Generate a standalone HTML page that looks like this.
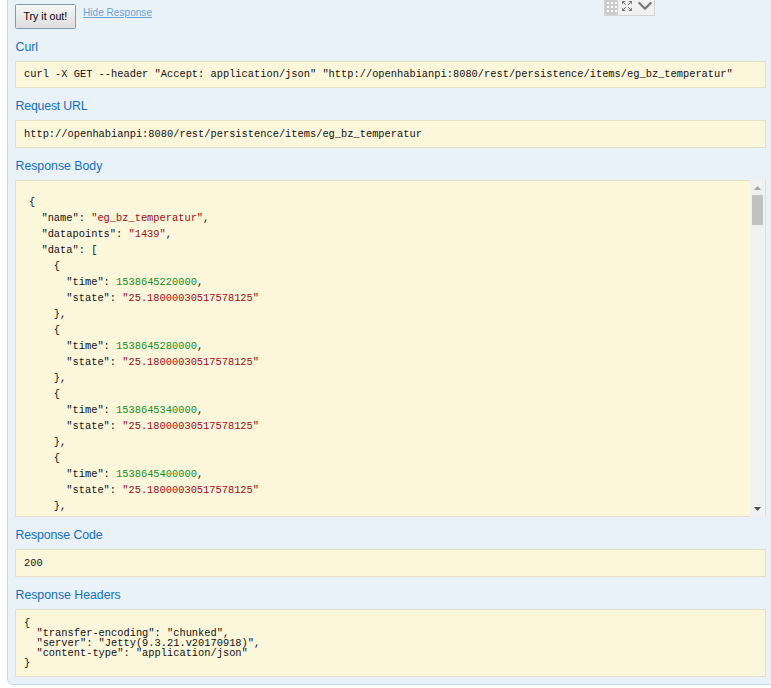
<!DOCTYPE html>
<html><head><meta charset="utf-8">
<style>
html,body{margin:0;padding:0;background:#fff;width:771px;height:688px;overflow:hidden;position:relative;font-family:"Liberation Sans",sans-serif;}
.abs{position:absolute;}
#cont{position:absolute;left:7px;top:-20px;width:800px;height:705px;background:#e9f1f9;border:1px solid #c3d9ec;border-radius:0 0 0 6px;box-sizing:border-box;}
#btn{position:absolute;left:15px;top:4px;width:60.5px;height:24.7px;box-sizing:border-box;border:1px solid #7f9ab5;border-radius:1.5px;background:linear-gradient(#f6f6f6,#dedede);}
#btntxt{position:absolute;left:23.5px;top:8px;font-size:10.6px;line-height:16px;color:#000;white-space:nowrap;}
#hide{position:absolute;left:83px;top:5.8px;font-size:10.1px;line-height:14px;color:#6ba2d4;text-decoration:underline;white-space:nowrap;}
h4{position:absolute;margin:0;left:15.5px;font-weight:normal;font-size:12.3px;line-height:16px;color:#1370c0;white-space:nowrap;}
.pre{position:absolute;left:15px;width:751px;box-sizing:border-box;background:#fcf6db;border:1px solid #e5e0c6;}
.mono{position:absolute;font-family:"Liberation Mono",monospace;font-size:10.37px;white-space:pre;color:#111;}
.s{color:#9a0f16;}
.n{color:#138f1f;}
</style></head><body>
<div id="cont"></div>

<div id="btn"></div>
<div id="btntxt">Try it out!</div>
<div id="hide">Hide Response</div>

<h4 style="top:39px">Curl</h4>
<div class="pre" style="top:61px;height:27px"></div>
<div class="mono" style="left:24px;top:66px;line-height:16px">curl -X GET --header "Accept: application/json" "http://openhabianpi:8080/rest/persistence/items/eg_bz_temperatur"</div>

<h4 style="top:98px;letter-spacing:-0.17px">Request URL</h4>
<div class="pre" style="top:120px;height:28px"></div>
<div class="mono" style="left:24px;top:126px;line-height:16px">http://openhabianpi:8080/rest/persistence/items/eg_bz_temperatur</div>

<h4 style="top:158px">Response Body</h4>
<div class="pre" style="top:180px;height:337px"></div>
<div class="mono" style="left:29px;top:194px;line-height:16px">{
  "name": <span class="s">"eg_bz_temperatur"</span>,
  "datapoints": <span class="s">"1439"</span>,
  "data": [
    {
      "time": <span class="n">1538645220000</span>,
      "state": <span class="s">"25.18000030517578125"</span>
    },
    {
      "time": <span class="n">1538645280000</span>,
      "state": <span class="s">"25.18000030517578125"</span>
    },
    {
      "time": <span class="n">1538645340000</span>,
      "state": <span class="s">"25.18000030517578125"</span>
    },
    {
      "time": <span class="n">1538645400000</span>,
      "state": <span class="s">"25.18000030517578125"</span>
    },</div>
<!-- scrollbar -->
<div class="abs" style="left:750px;top:180px;width:15px;height:337px;background:#f1f1f1"></div>
<div class="abs" style="left:752px;top:195px;width:11px;height:30px;background:#c1c1c1"></div>
<svg class="abs" style="left:750px;top:180px" width="15" height="337"><polygon points="4,10 11,10 7.5,6" fill="#a3a3a3"/><polygon points="4,327 11,327 7.5,331" fill="#505050"/></svg>

<h4 style="top:527px;letter-spacing:-0.1px">Response Code</h4>
<div class="pre" style="top:549px;height:28px"></div>
<div class="mono" style="left:24px;top:555px;line-height:16px">200</div>

<h4 style="top:587px">Response Headers</h4>
<div class="pre" style="top:609px;height:68px"></div>
<div class="mono" style="left:24px;top:617.60px;line-height:10px">{</div>
<div class="mono" style="left:24px;top:627.70px;line-height:10px">  "transfer-encoding": "chunked",</div>
<div class="mono" style="left:24px;top:637.80px;line-height:10px">  "server": "Jetty(9.3.21.v20170918)",</div>
<div class="mono" style="left:24px;top:647.90px;line-height:10px">  "content-type": "application/json"</div>
<div class="mono" style="left:24px;top:658.00px;line-height:10px">}</div>

<svg class="abs" style="left:604px;top:0" width="52" height="17">
<rect x="0.5" y="-1" width="50" height="16.5" fill="#f1f1f1" stroke="#d4d4d4"/>
<rect x="1" y="0" width="13" height="15" fill="#cccccc"/>
<g fill="#fff"><rect x="3" y="2" width="2" height="2"/><rect x="7" y="2" width="2" height="2"/><rect x="11" y="2" width="2" height="2"/>
<rect x="3" y="6" width="2" height="2"/><rect x="7" y="6" width="2" height="2"/><rect x="11" y="6" width="2" height="2"/>
<rect x="3" y="10" width="2" height="2"/><rect x="7" y="10" width="2" height="2"/><rect x="11" y="10" width="2" height="2"/></g>
<g fill="#7a7a7a" stroke="#7a7a7a" stroke-width="1">
<polygon points="18,1 21.6,1 18,4.6" stroke="none"/><line x1="19" y1="2" x2="22" y2="5"/>
<polygon points="28,1 24.4,1 28,4.6" stroke="none"/><line x1="27" y1="2" x2="24" y2="5"/>
<polygon points="18,11 21.6,11 18,7.4" stroke="none"/><line x1="19" y1="10" x2="22" y2="7"/>
<polygon points="28,11 24.4,11 28,7.4" stroke="none"/><line x1="27" y1="10" x2="24" y2="7"/>
</g>
<polyline points="35.3,3 41,8.7 46.7,3" fill="none" stroke="#777" stroke-width="2.3" stroke-linecap="round" stroke-linejoin="round"/>
</svg>
</body></html>
